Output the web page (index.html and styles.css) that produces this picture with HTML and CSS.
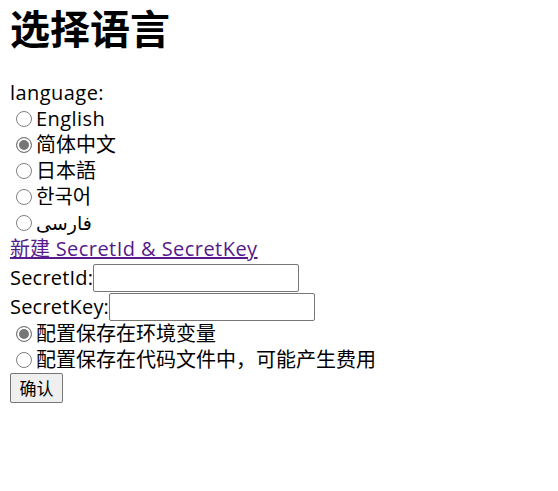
FILE: index.html
```html
<!DOCTYPE html>
<html lang="zh-CN">
<head>
<meta charset="utf-8">
<title>选择语言</title>
<link rel="stylesheet" href="styles.css">
</head>
<body>
<h1 class="title">选择语言</h1>
<form class="form">
  <div class="line"><span class="lat">language:</span></div>
  <label class="line opt"><input class="radio" type="radio" name="lang"><span class="lat">English</span></label>
  <label class="line opt"><input class="radio" type="radio" name="lang" checked>简体中文</label>
  <label class="line opt"><input class="radio" type="radio" name="lang">日本語</label>
  <label class="line opt"><input class="radio" type="radio" name="lang">한국어</label>
  <label class="line opt"><input class="radio" type="radio" name="lang"><span class="fa">فارسی</span></label>
  <div class="line"><a class="link" href="#">新建<span class="lat"> SecretId &amp; SecretKey</span></a></div>
  <label class="field"><span class="lat-s">SecretId:</span><input class="text" type="text"></label>
  <label class="field"><span class="lat-s">SecretKey:</span><input class="text" type="text"></label>
  <label class="line opt"><input class="radio" type="radio" name="save" checked>配置保存在环境变量</label>
  <label class="line opt"><input class="radio" type="radio" name="save">配置保存在代码文件中，可能产生费用</label>
  <div class="actions"><button class="btn" type="button">确认</button></div>
</form>
</body>
</html>
```
FILE: styles.css
```css
html, body {
  background: #fff;
}
body {
  margin: 0 10px 8px;
  color: #000;
  font-family: "Open Sans", "Noto Sans CJK SC", "DejaVu Sans", sans-serif;
  font-size: 20px;
}
.title {
  margin: 0 0 26px;
  font-family: "Noto Sans CJK SC", sans-serif;
  font-size: 40px;
  font-weight: 700;
  line-height: 54px;
}
.form {
  display: flex;
  flex-direction: column;
  align-items: flex-start;
}
.line {
  height: 26px;
  line-height: 26px;
  white-space: nowrap;
}
.lat {
  letter-spacing: 0.45px;
}
.lat-s {
  letter-spacing: 0.2px;
}
.opt {
  display: flex;
  align-items: center;
}
.radio {
  appearance: none;
  -webkit-appearance: none;
  width: 16px;
  height: 16px;
  margin: 0 4px 0 6px;
  border: 1px solid #808080;
  border-radius: 50%;
  background: #fff;
  box-sizing: border-box;
  flex: none;
}
.radio:checked {
  border-color: #767676;
  background: #767676;
  box-shadow: inset 0 0 0 2px #fff;
}
.fa {
  font-family: "DejaVu Sans", sans-serif;
  font-size: 19px;
}
.link {
  color: #551a8b;
  text-decoration: underline;
}
.field {
  display: flex;
  align-items: center;
  height: 30px;
  white-space: nowrap;
}
.field + .field {
  height: 29px;
}
.text {
  width: 206px;
  height: 28px;
  margin: 1px 0 0;
  padding: 1px 2px;
  box-sizing: border-box;
  border: 1px solid #767676;
  border-radius: 2px;
  background: #fff;
  font: inherit;
  font-size: 16px;
}
.btn {
  width: 53px;
  height: 30px;
  margin: 0;
  padding: 0 6px;
  box-sizing: border-box;
  border: 1px solid #767676;
  border-radius: 2px;
  background: #efefef;
  color: #000;
  font-family: "Noto Sans CJK SC", sans-serif;
  font-size: 17px;
  line-height: 26px;
}
```
